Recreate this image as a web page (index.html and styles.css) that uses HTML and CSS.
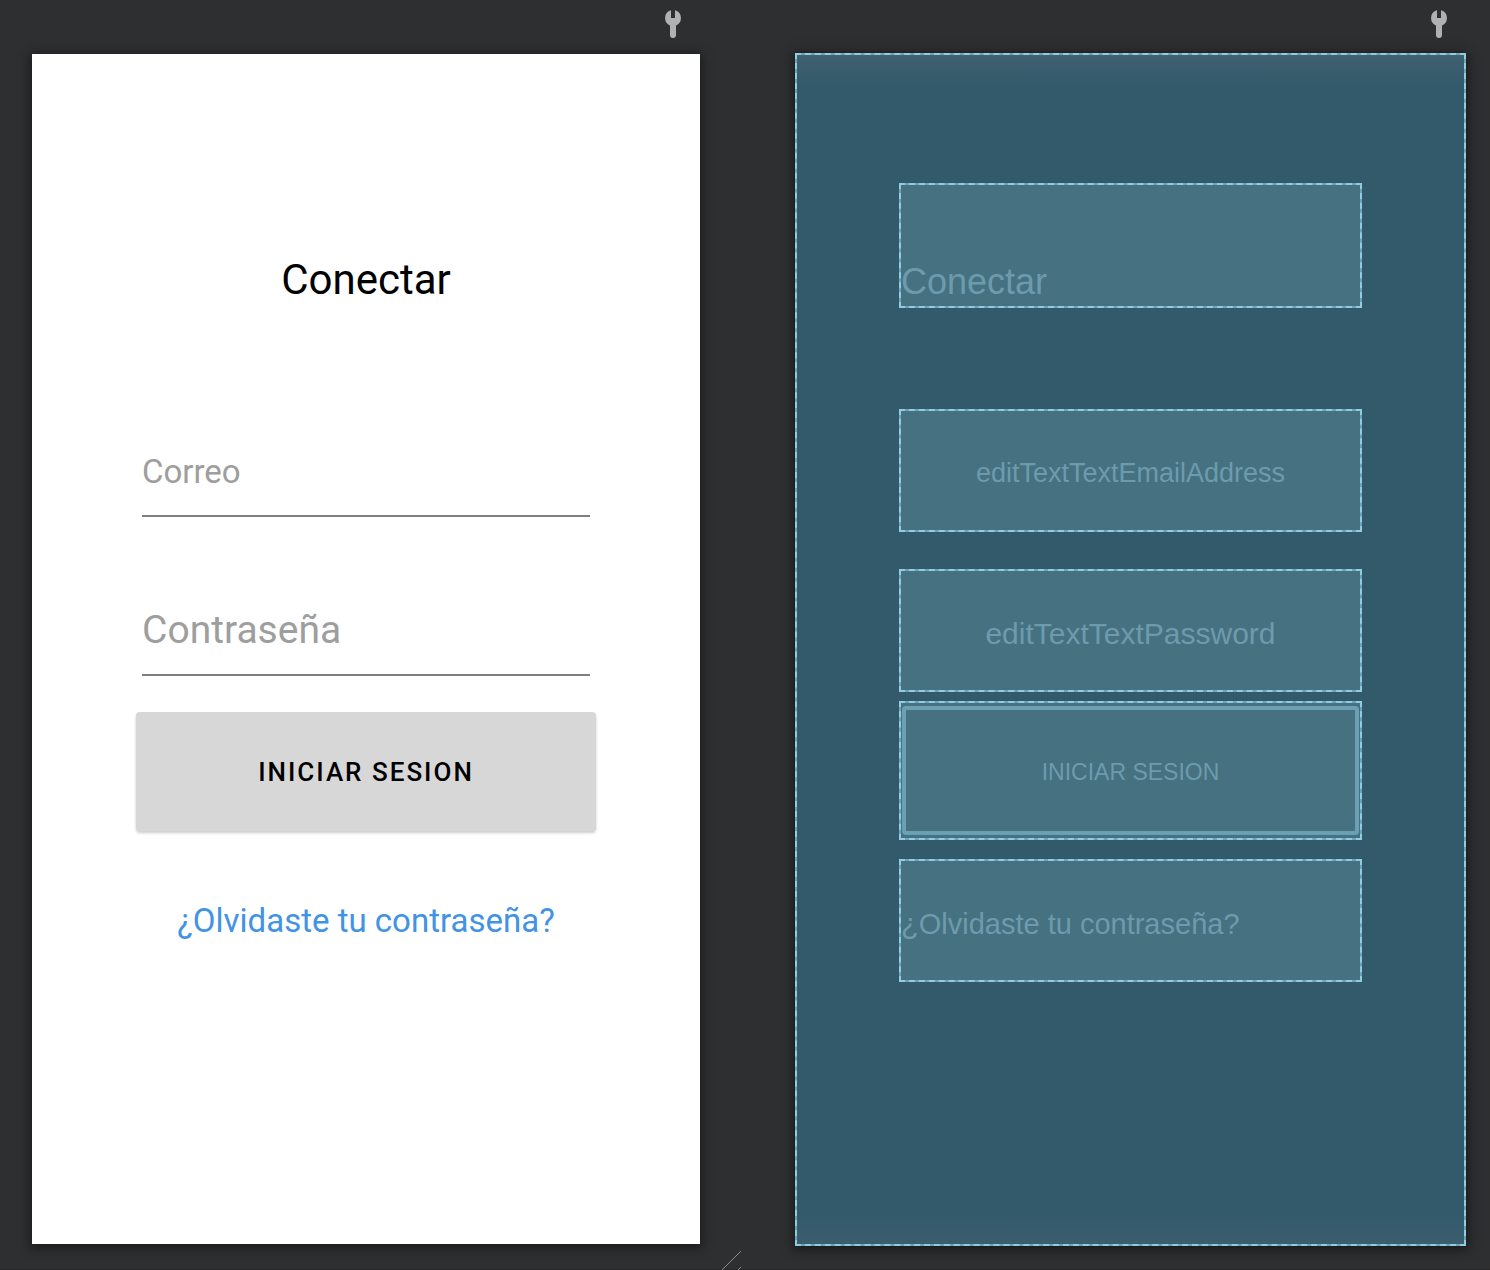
FILE: index.html
```html
<!DOCTYPE html>
<html lang="es">
<head>
  <meta charset="utf-8">
  <meta name="viewport" content="width=device-width, initial-scale=1">
  <title>Conectar</title>
  <link rel="stylesheet" href="styles.css">
</head>
<body>
  <main class="editor">
    <section class="pane" aria-label="Design">
      <header class="pane-bar">
        <svg class="wrench" viewBox="0 0 16 28" aria-hidden="true">
          <path d="M6 0.3V8H10V0.3A8 8 0 0 1 11 15.4V25A3 3 0 0 1 5 25V15.4A8 8 0 0 1 6 0.3Z"/>
        </svg>
      </header>
      <form class="screen">
        <h1 class="title">Conectar</h1>
        <input class="field" type="email" placeholder="Correo" aria-label="Correo">
        <input class="field field-large" type="password" placeholder="Contraseña" aria-label="Contraseña">
        <button class="submit" type="button">INICIAR SESION</button>
        <a class="forgot" href="#">¿Olvidaste tu contraseña?</a>
      </form>
      <svg class="resize" viewBox="0 0 19 19" aria-hidden="true">
        <path d="M0 19L19 0M16 19L19 16"/>
      </svg>
    </section>
    <section class="pane" aria-label="Blueprint">
      <header class="pane-bar">
        <svg class="wrench" viewBox="0 0 16 28" aria-hidden="true">
          <path d="M6 0.3V8H10V0.3A8 8 0 0 1 11 15.4V25A3 3 0 0 1 5 25V15.4A8 8 0 0 1 6 0.3Z"/>
        </svg>
      </header>
      <div class="blueprint outline">
        <div class="box outline box-title">Conectar</div>
        <div class="box outline box-email">editTextTextEmailAddress</div>
        <div class="box outline box-password">editTextTextPassword</div>
        <div class="box outline box-button"><span class="box-button-face">INICIAR SESION</span></div>
        <div class="box outline box-forgot">¿Olvidaste tu contraseña?</div>
      </div>
    </section>
  </main>
</body>
</html>
```
FILE: styles.css
```css
* {
  box-sizing: border-box;
}

body {
  margin: 0;
  background: #2e2f31;
  font-family: Roboto, sans-serif;
}

.editor {
  display: grid;
  grid-template-columns: minmax(0, 668fr) minmax(0, 671fr);
  gap: 95px;
  min-height: 100vh;
  padding: 0 24px 23px 32px;
  border-bottom: 1px solid #2b2627;
}

.pane {
  position: relative;
  display: flex;
  flex-direction: column;
}

.pane-bar {
  display: flex;
  justify-content: flex-end;
  height: 53px;
  padding: 10px 19px 0;
}

.wrench {
  width: 16px;
  height: 28px;
  fill: #afb1b3;
}

.resize {
  position: absolute;
  right: -41px;
  bottom: -24px;
  width: 19px;
  height: 19px;
  fill: none;
  stroke: #8a8b8c;
}

.screen,
.blueprint {
  flex: 1;
  display: flex;
  flex-direction: column;
  box-shadow: 0 2px 10px 2px #1a1a1b;
}

.screen {
  margin: 1px 0 2px;
  padding: 129px 104px 40px;
  background: #fff;
}

.title {
  margin: 0;
  padding-top: 73px;
  height: 124px;
  font-size: 42px;
  font-weight: 400;
  line-height: 48px;
  text-align: center;
  color: #000;
}

.field {
  height: 90px;
  margin: 120px 6px 0;
  padding: 0;
  border: 0;
  border-bottom: 2px solid #7f7f7f;
  background: none;
  font: 33px Roboto, sans-serif;
  color: #000;
}

.field::placeholder {
  color: #9e9e9e;
  opacity: 1;
}

.field-large {
  margin-top: 69px;
  font-size: 39px;
}

.submit {
  height: 119px;
  margin-top: 36px;
  border: 0;
  border-radius: 4px;
  background: #d7d7d7;
  box-shadow: 0 2px 3px #0003;
  font: 500 26px Roboto, sans-serif;
  letter-spacing: 2px;
  color: #000;
}

.forgot {
  margin-top: 70px;
  font-size: 33px;
  line-height: 40px;
  text-align: center;
  text-decoration: none;
  color: #4293e6;
}

.outline {
  --fill: #457181;
  border: 2px dashed #93cbe0;
  background:
    linear-gradient(var(--fill), var(--fill)) padding-box,
    linear-gradient(#6ca5ba, #6ca5ba) border-box;
}

.blueprint {
  padding: 128px 102px 40px;
  background:
    linear-gradient(#3f6171, #335a6b 28px, #335a6b calc(100% - 28px), #3b5e6e) padding-box,
    linear-gradient(#6ca5ba, #6ca5ba) border-box;
  font-family: "Liberation Sans", sans-serif;
  color: #6d9bad;
}

.box {
  display: flex;
  align-items: center;
  justify-content: center;
  height: 123px;
}

.box-title {
  align-items: flex-end;
  justify-content: flex-start;
  height: 125px;
  padding-bottom: 3px;
  font-size: 36px;
  line-height: 42px;
}

.box-email {
  margin-top: 101px;
  padding-top: 6px;
  font-size: 27px;
}

.box-password {
  margin-top: 37px;
  padding-top: 6px;
  font-size: 30px;
}

.box-button {
  align-items: stretch;
  height: 139px;
  margin-top: 9px;
  padding: 3px 1px;
  font-size: 23px;
}

.box-button-face {
  flex: 1;
  display: flex;
  align-items: center;
  justify-content: center;
  padding-top: 4px;
  border: 4px solid #6b9fb4;
  border-radius: 4px;
}

.box-forgot {
  justify-content: flex-start;
  margin-top: 19px;
  padding-top: 8px;
  font-size: 29px;
}
```
